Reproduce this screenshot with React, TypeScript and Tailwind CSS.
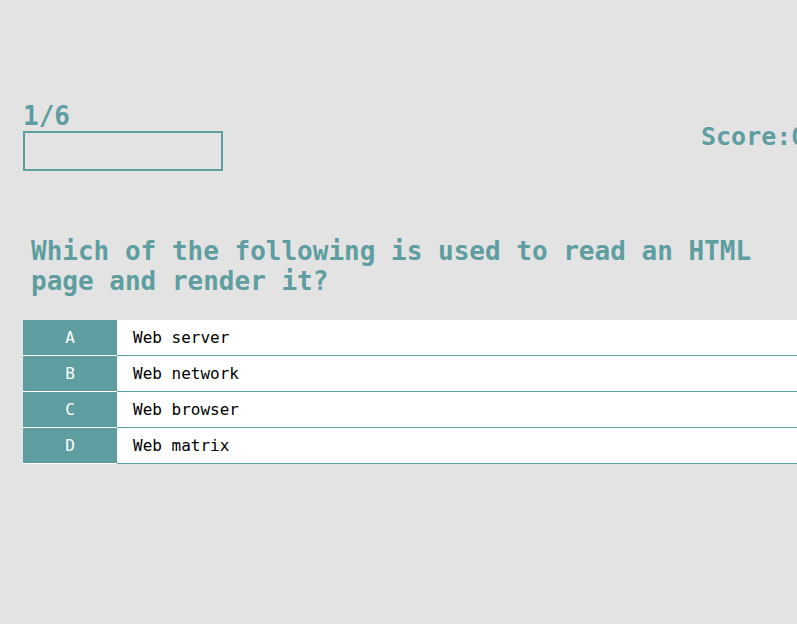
const answers = [
    { letter: 'A', text: 'Web server' },
    { letter: 'B', text: 'Web network' },
    { letter: 'C', text: 'Web browser' },
    { letter: 'D', text: 'Web matrix' },
];

export default function App() {
    return (
        <div className="min-h-screen w-full overflow-hidden bg-[#e3e3e3] font-['DejaVu_Sans_Mono',monospace] text-[#5f9ea0]">
            <div className="flex items-start pt-[101px] pl-[23px]">
                <div className="w-[200px] shrink-0">
                    <div className="text-[26px] font-bold leading-[30px]">1/6</div>
                    <div className="h-[40px] w-[200px] border-2 border-[#5f9ea0]"></div>
                </div>
                <div className="ml-[478px] mt-[21px] shrink-0 whitespace-nowrap text-[25px] font-bold leading-[30px]">
                    Score:0
                </div>
            </div>

            <h1 className="mt-[65px] pl-[31px] pr-[30px] text-[26px] font-bold leading-[30px]">
                Which of the following is used to read an HTML page and render it?
            </h1>

            <div className="mt-[24px] ml-[23px] w-[800px]">
                {answers.map(a => (
                    <div key={a.letter} className="flex h-[36px] cursor-pointer">
                        <div className="flex w-[94px] shrink-0 items-center justify-center border-b border-white bg-[#5f9ea0] text-[16px] text-white">
                            {a.letter}
                        </div>
                        <div className="flex flex-1 items-center border-b border-[#5f9ea0] bg-white pl-[16px] text-[16px] text-black">
                            {a.text}
                        </div>
                    </div>
                ))}
            </div>
        </div>
    );
}
